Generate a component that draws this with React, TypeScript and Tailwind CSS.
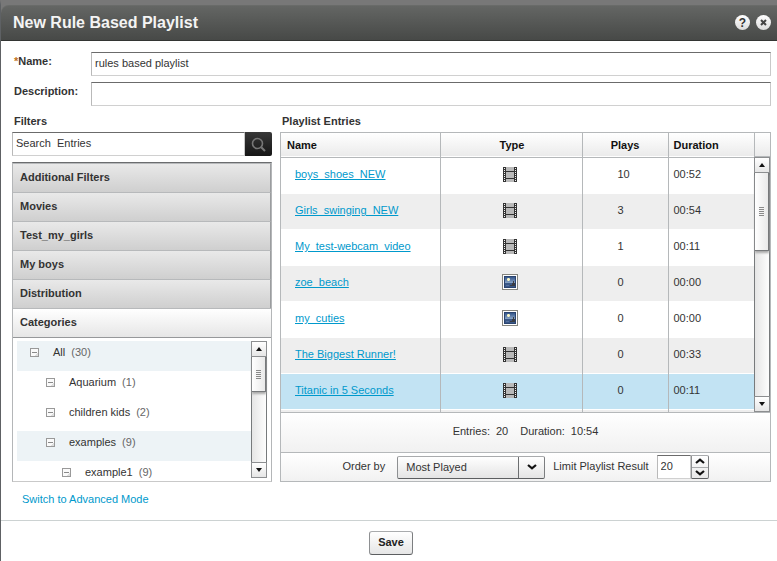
import { useState } from "react";
import type { ReactNode } from "react";

type EntryType = "video" | "image";

interface Entry {
  name: string;
  type: EntryType;
  plays: number;
  duration: string;
}

const entries: Entry[] = [
  { name: "boys_shoes_NEW", type: "video", plays: 10, duration: "00:52" },
  { name: "Girls_swinging_NEW", type: "video", plays: 3, duration: "00:54" },
  { name: "My_test-webcam_video", type: "video", plays: 1, duration: "00:11" },
  { name: "zoe_beach", type: "image", plays: 0, duration: "00:00" },
  { name: "my_cuties", type: "image", plays: 0, duration: "00:00" },
  { name: "The Biggest Runner!", type: "video", plays: 0, duration: "00:33" },
  { name: "Titanic in 5 Seconds", type: "video", plays: 0, duration: "00:11" },
];

const SELECTED = 6;

const filters = ["Additional Filters", "Movies", "Test_my_girls", "My boys", "Distribution"];

const categories = [
  { name: "All", count: 30, indent: "pl-[13px]", shaded: true },
  { name: "Aquarium", count: 1, indent: "pl-[29px]", shaded: false },
  { name: "children kids", count: 2, indent: "pl-[29px]", shaded: false },
  { name: "examples", count: 9, indent: "pl-[29px]", shaded: true },
  { name: "example1", count: 9, indent: "pl-[45px]", shaded: false },
];

function FilmIcon() {
  const holes = [1, 3, 5, 7, 9, 11, 13];
  return (
    <svg width="14" height="15" viewBox="0 0 14 15" shapeRendering="crispEdges" role="img" aria-label="Video">
      <rect width="14" height="15" fill="#b9b9b9" />
      <rect width="3" height="15" fill="#333333" />
      <rect x="11" width="3" height="15" fill="#333333" />
      <rect x="3" y="4" width="8" height="1" fill="#333333" />
      <rect x="3" y="11" width="8" height="1" fill="#333333" />
      {holes.map((y) => (
        <g key={y} fill="#f4f4f4">
          <rect x="1" y={y} width="1" height="1" />
          <rect x="12" y={y} width="1" height="1" />
        </g>
      ))}
    </svg>
  );
}

function ImageIcon() {
  return (
    <svg width="16" height="16" viewBox="0 0 16 16" shapeRendering="crispEdges" role="img" aria-label="Image">
      <defs>
        <linearGradient id="sky" x1="0" y1="0" x2="0" y2="1">
          <stop offset="0" stopColor="#34558a" />
          <stop offset="1" stopColor="#8ba6c8" />
        </linearGradient>
      </defs>
      <rect width="16" height="16" fill="#85857f" />
      <rect x="1" y="1" width="14" height="14" fill="#ffffff" />
      <rect x="2" y="2" width="12" height="12" fill="#2a4470" />
      <rect x="3" y="3" width="10" height="6" fill="url(#sky)" />
      <rect x="3" y="9" width="10" height="4" fill="#3a5887" />
      <path d="M5 4H8V7H5Z" fill="#b9c6b4" />
      <path d="M6 4H7V5H8V6H7V7H6V6H5V5H6Z" fill="#fbf6c8" />
      <path d="M8 12V11H10V9H11V7H12V9H13V12Z" fill="#3a3c42" />
      <rect x="4" y="11" width="3" height="1" fill="#5672a0" />
    </svg>
  );
}

function CollapseIcon() {
  return (
    <svg width="9" height="9" viewBox="0 0 9 9" shapeRendering="crispEdges" aria-hidden="true">
      <rect width="9" height="9" fill="#999999" />
      <rect x="1" y="1" width="7" height="7" fill="#fafafa" />
      <path d="M8 4V8H4Z" fill="#dedede" />
      <rect x="2" y="4" width="5" height="1" fill="#8a8a8a" />
    </svg>
  );
}

function ArrowButton({ direction }: { direction: "up" | "down" }) {
  const up = direction === "up";
  return (
    <button
      type="button"
      aria-label={up ? "Scroll up" : "Scroll down"}
      className="flex h-4 w-full shrink-0 items-center justify-center border border-[#8c8e90] bg-linear-to-b from-white to-[#e6e6e6]"
    >
      <svg width="6" height="4" viewBox="0 0 6 4" aria-hidden="true">
        <path d={up ? "M3 0L6 4H0Z" : "M0 0H6L3 4Z"} fill="#111111" />
      </svg>
    </button>
  );
}

function Scrollbar({ thumb }: { thumb: string }) {
  return (
    <div className="flex w-4 shrink-0 flex-col bg-linear-to-r from-[#e4e4e4] to-white">
      <ArrowButton direction="up" />
      <div className="flex-1 border-r border-l border-[#777a7c]">
        <div
          className={`flex flex-col items-center justify-center gap-px border-r border-b border-[#77797b] bg-linear-to-r from-white to-[#e9e9e9] shadow-[0_2px_2px_#aaaaaa] ${thumb}`}
        >
          {[0, 1, 2, 3, 4].map((i) => (
            <span key={i} className="h-px w-[5px] bg-[#8a8a8a]" />
          ))}
        </div>
      </div>
      <ArrowButton direction="down" />
    </div>
  );
}

function Chevron({ up = false }: { up?: boolean }) {
  return (
    <svg width="10" height="6" viewBox="0 0 10 6" aria-hidden="true">
      <path d={up ? "M1 5L5 1.6L9 5" : "M1 1L5 4.4L9 1"} fill="none" stroke="#111111" strokeWidth="2.2" />
    </svg>
  );
}

function RoundButton({ label, children }: { label: string; children: ReactNode }) {
  return (
    <button
      type="button"
      aria-label={label}
      className="flex size-[15px] items-center justify-center rounded-full bg-linear-to-b from-white to-[#dcdcdc] text-[#333333]"
    >
      {children}
    </button>
  );
}

const field =
  "h-6 min-w-0 border border-t-[#6b6b6b] border-r-[#c9c9c9] border-b-[#d0d0d0] border-l-[#b9b9b9] bg-white px-[3px] pb-0.5 text-[#333333] outline-none";

export default function App() {
  const [name, setName] = useState("rules based playlist");
  const [description, setDescription] = useState("");
  const [search, setSearch] = useState("Search  Entries");
  const [limit, setLimit] = useState(20);

  return (
    <div className="flex min-h-screen flex-col border-t-5 border-l border-t-[#787878] border-l-[#5e6164] bg-[#787878] font-['Liberation_Sans',Arial,sans-serif] text-[11px] leading-4 text-[#333333]">
      <header className="flex h-9 items-center justify-between rounded-tl-lg border-t border-b border-t-[#696b69] border-b-[#333533] bg-linear-to-b from-[#646664] to-[#474947] pr-1.5 pb-px pl-3">
        <h1 className="text-base font-bold text-[#f4f4f4]">New Rule Based Playlist</h1>
        <div className="flex gap-1.5">
          <RoundButton label="Help">
            <span className="text-xs leading-3 font-bold">?</span>
          </RoundButton>
          <RoundButton label="Close">
            <svg width="7" height="7" viewBox="0 0 7 7" aria-hidden="true">
              <path d="M1 1L6 6M6 1L1 6" stroke="#444444" strokeWidth="2" />
            </svg>
          </RoundButton>
        </div>
      </header>

      <main className="flex flex-1 flex-col bg-white">
        <div className="flex flex-col gap-1.5 pt-[11px] pr-1.5 pl-[13px]">
          <div className="flex">
            <label htmlFor="name" className="w-[77px] pt-px font-bold">
              <span className="text-[#c07020]">*</span>Name:
            </label>
            <input id="name" value={name} onChange={(e) => setName(e.target.value)} className={`flex-1 ${field}`} />
          </div>
          <div className="flex">
            <label htmlFor="description" className="w-[77px] pt-px font-bold">
              Description:
            </label>
            <input
              id="description"
              value={description}
              onChange={(e) => setDescription(e.target.value)}
              className={`flex-1 ${field}`}
            />
          </div>
        </div>

        <div className="flex gap-2 pr-1.5 pl-[11px]">
          <section className="flex w-[260px] shrink-0 flex-col">
            <h2 className="h-[26px] pt-[7px] pl-0.5 font-bold">Filters</h2>
            <div className="flex">
              <input
                aria-label="Search entries"
                value={search}
                onChange={(e) => setSearch(e.target.value)}
                className={`flex-1 ${field}`}
              />
              <button
                type="button"
                aria-label="Search"
                className="flex h-6 w-[27px] items-center justify-center rounded-r-xs bg-linear-to-b from-[#383838] to-[#161616]"
              >
                <svg width="15" height="15" viewBox="0 0 15 15" fill="none" stroke="#777777" aria-hidden="true">
                  <circle cx="6.5" cy="6.5" r="5" strokeWidth="1.6" />
                  <path d="M10.2 10.2L14 14" strokeWidth="2" />
                </svg>
              </button>
            </div>

            <div className="mt-1.5 flex flex-col border border-t-[#6b6d6f] border-r-[#b4b6b8] border-b-[#c9c9c9] border-l-[#b4b6b8]">
              {filters.map((f) => (
                <button
                  key={f}
                  type="button"
                  className="h-[29px] border-t border-r border-t-[#b7b9bb] border-r-[#9b9d9f] bg-linear-to-b from-[#e9e9e9] to-[#cfcfcf] px-[7px] pb-0.5 text-left font-bold"
                >
                  {f}
                </button>
              ))}
              <button
                type="button"
                aria-expanded="true"
                className="h-[30px] border-t border-b border-t-[#b7b9bb] border-b-[#96989a] bg-linear-to-b from-white to-[#e6e6e6] px-[7px] pb-0.5 text-left font-bold"
              >
                Categories
              </button>
              <div className="flex h-[143px] px-1 pt-[3px]">
                <ul className="flex-1 overflow-hidden">
                  {categories.map((c) => (
                    <li
                      key={c.name}
                      className={`flex h-[30px] items-center pb-2 ${c.indent} ${c.shaded ? "bg-[#edf3f6]" : "bg-white"}`}
                    >
                      <button type="button" aria-label={`Collapse ${c.name}`} className="mr-3.5">
                        <CollapseIcon />
                      </button>
                      <span>{c.name}</span>
                      <span className="ml-1.5 text-[#666666]">({c.count})</span>
                    </li>
                  ))}
                </ul>
                <div className="flex pb-[3px]">
                  <Scrollbar thumb="h-[35px]" />
                </div>
              </div>
            </div>
          </section>

          <section className="flex min-w-0 flex-1 flex-col">
            <h2 className="h-[26px] pt-[7px] pl-0.5 font-bold">Playlist Entries</h2>
            <div className="flex flex-1 flex-col border border-[#b5b8ba]">
              <div className="flex h-[279px] overflow-hidden">
                <table className="flex-1 table-fixed border-collapse self-start">
                  <colgroup>
                    <col />
                    <col className="w-[142px]" />
                    <col className="w-[86px]" />
                    <col className="w-[86px]" />
                  </colgroup>
                  <thead>
                    <tr className="h-6 border-b border-[#b5b8ba] bg-linear-to-b from-white to-[#ebebeb] text-[#111111]">
                      <th className="border-r border-[#b5b8ba] pl-1.5 text-left">Name</th>
                      <th className="border-r border-[#b5b8ba] pl-0.5">Type</th>
                      <th className="border-r border-[#b5b8ba]">Plays</th>
                      <th className="pl-[5px] text-left">Duration</th>
                    </tr>
                  </thead>
                  <tbody>
                    {entries.map((e, i) => (
                      <tr
                        key={e.name}
                        className={`h-9 border-b border-white ${
                          i === SELECTED ? "bg-[#c2e3f3]" : i % 2 ? "bg-[#eeeeee]" : "bg-white"
                        }`}
                      >
                        <td className="border-r border-r-[#b5b8ba] pb-0.5 pl-3.5">
                          <a href="#entry" className="text-[#0099cc] underline underline-offset-1">
                            {e.name}
                          </a>
                        </td>
                        <td className="border-r border-r-[#b5b8ba] pr-0.5 pb-0.5">
                          <div className="flex justify-center">{e.type === "video" ? <FilmIcon /> : <ImageIcon />}</div>
                        </td>
                        <td className="border-r border-r-[#b5b8ba] pb-0.5 pl-[35px]">{e.plays}</td>
                        <td className="pb-0.5 pl-[5px]">{e.duration}</td>
                      </tr>
                    ))}
                    <tr className="h-9 bg-[#eeeeee]">
                      <td className="border-r border-r-[#b5b8ba]" />
                      <td className="border-r border-r-[#b5b8ba]" />
                      <td className="border-r border-r-[#b5b8ba]" />
                      <td />
                    </tr>
                  </tbody>
                </table>
                <div className="flex w-4 flex-col">
                  <div className="h-6 border-b border-l border-[#b5b8ba] bg-linear-to-b from-white to-[#ebebeb]" />
                  <div className="flex flex-1">
                    <Scrollbar thumb="h-[78px]" />
                  </div>
                </div>
              </div>

              <div className="flex h-10 items-center justify-center gap-3 border-t border-[#b5b8ba] bg-linear-to-b from-white to-[#f1f1f1] pb-1">
                <span className="flex gap-1.5">
                  <span>Entries:</span>
                  <span>20</span>
                </span>
                <span className="flex gap-1.5">
                  <span>Duration:</span>
                  <span>10:54</span>
                </span>
              </div>

              <div className="flex h-[29px] items-center justify-center border-t border-[#b5b8ba] bg-linear-to-b from-white to-[#f1f1f1]">
                <label htmlFor="order" className="mr-3 pb-0.5">
                  Order by
                </label>
                <div className="relative mr-2">
                  <select
                    id="order"
                    className="h-[23px] w-[148px] appearance-none rounded-xs border border-t-[#a9abad] border-r-[#7c7e80] border-b-[#5c5e60] border-l-[#8e9092] bg-linear-to-b from-white to-[#e4e4e4] pl-2 outline-none"
                  >
                    <option>Most Played</option>
                  </select>
                  <span className="pointer-events-none absolute inset-y-px right-0 flex w-[27px] items-center justify-center border-l border-[#6c6e70]">
                    <Chevron />
                  </span>
                </div>
                <label htmlFor="limit" className="mr-2 pb-0.5">
                  Limit Playlist Result
                </label>
                <input
                  id="limit"
                  value={limit}
                  onChange={(e) => setLimit(Number(e.target.value) || 0)}
                  className={`w-[34px] ${field}`}
                />
                <div className="flex h-6 w-[18px] flex-col rounded-r-xs border border-t-[#a9abad] border-r-[#7c7e80] border-b-[#5c5e60] border-l-[#8e9092] bg-linear-to-b from-white to-[#e8e8e8]">
                  <button
                    type="button"
                    aria-label="Increase limit"
                    onClick={() => setLimit(limit + 1)}
                    className="flex flex-1 items-center justify-center border-b border-[#a9abad]"
                  >
                    <Chevron up />
                  </button>
                  <button
                    type="button"
                    aria-label="Decrease limit"
                    onClick={() => setLimit(limit - 1)}
                    className="flex flex-1 items-center justify-center"
                  >
                    <Chevron />
                  </button>
                </div>
              </div>
            </div>
          </section>
        </div>

        <div className="h-[38px] pt-[9px] pl-[21px]">
          <a href="#advanced" className="text-[#0099cc]">
            Switch to Advanced Mode
          </a>
        </div>
        <footer className="flex justify-center border-t border-[#ccd2d2] pt-2.5 pb-1.5 pl-1">
          <button
            type="button"
            className="h-6 w-11 rounded-[3px] border border-t-[#a9abad] border-r-[#7c7e80] border-b-[#5c5e60] border-l-[#8e9092] bg-linear-to-b from-white to-[#e6e6e6] pb-0.5 font-bold text-[#222222]"
          >
            Save
          </button>
        </footer>
      </main>
    </div>
  );
}
